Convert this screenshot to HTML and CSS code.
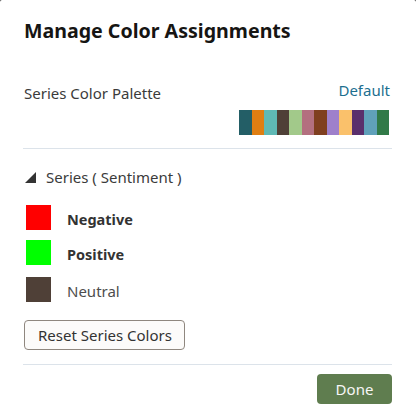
FILE: index.html
```html
<!DOCTYPE html>
<html>
<head>
<meta charset="utf-8">
<link rel="stylesheet" href="styles.css">
</head>
<body>
<div class="dialog">
  <h1 class="title">Manage Color Assignments</h1>
  <div class="palette-row">
    <span class="label">Series Color Palette</span>
    <div class="palette-right">
      <a class="link">Default</a>
      <div class="swatches">
        <span style="background:#235e66"></span>
        <span style="background:#df7e12"></span>
        <span style="background:#5fb9b5"></span>
        <span style="background:#4f4037"></span>
        <span style="background:#a2c98a"></span>
        <span style="background:#b3707f"></span>
        <span style="background:#7f3f1f"></span>
        <span style="background:#9e80cb"></span>
        <span style="background:#fac16b"></span>
        <span style="background:#5a2f6c"></span>
        <span style="background:#60a1ba"></span>
        <span style="background:#317a48"></span>
      </div>
    </div>
  </div>
  <div class="divider"></div>
  <div class="series-head">
    <svg class="tri" width="11" height="11" viewBox="0 0 11 11"><polygon points="11,0 11,11 0,11" fill="#333"/></svg>
    <span class="head-label">Series ( Sentiment )</span>
  </div>
  <ul class="series">
    <li><span class="sw" style="background:#ff0000"></span><span class="name bold">Negative</span></li>
    <li><span class="sw" style="background:#00ff00"></span><span class="name bold">Positive</span></li>
    <li><span class="sw" style="background:#4f4037"></span><span class="name">Neutral</span></li>
  </ul>
  <button class="btn-reset">Reset Series Colors</button>
  <div class="divider bottom"></div>
  <div class="footer">
    <button class="btn-done">Done</button>
  </div>
</div>
</body>
</html>
```

FILE: styles.css
```css
html, body {
  margin: 0;
  padding: 0;
  background: #3a3a3a;
}
body {
  font-family: "Noto Sans", "Open Sans", sans-serif;
  color: #333;
}
.dialog {
  width: 416px;
  height: 413px;
  box-sizing: border-box;
  padding: 0 24px;
  background: #fff;
  border-radius: 2px 2px 0 0;
}
.title {
  margin: 0;
  padding-top: 17px;
  font-size: 19.6px;
  line-height: 28px;
  font-weight: 700;
  color: #161513;
}
.palette-row {
  display: flex;
  justify-content: space-between;
  align-items: flex-start;
  margin-top: 35px;
}
.label {
  font-size: 15px;
  color: #3b3b3b;
  line-height: 20px;
  margin-top: 3px;
}
.palette-right {
  display: flex;
  flex-direction: column;
  align-items: flex-end;
}
.link {
  font-size: 15px;
  line-height: 20px;
  color: #1d6f8f;
  margin-right: 2px;
}
.swatches {
  display: flex;
  margin-top: 10px;
  margin-right: 3px;
}
.swatches span {
  width: 12.5px;
  height: 25px;
}
.divider {
  height: 1px;
  background: #dce3ea;
  margin: 13px 0 0 -1px;
}
.series-head {
  display: flex;
  align-items: center;
  height: 20px;
  margin-top: 18px;
}
.tri {
  margin-left: 1px;
  margin-right: 10px;
}
.head-label {
  font-size: 15px;
  line-height: 20px;
  color: #3b3b3b;
}
.series {
  list-style: none;
  margin: 18px 0 0 0;
  padding: 0;
}
.series li {
  display: flex;
  align-items: center;
  height: 25px;
  margin-bottom: 10px;
}
.series li:nth-child(2) { margin-bottom: 12px; }
.series li:last-child { margin-bottom: 0; }
.sw {
  width: 25px;
  height: 25px;
  margin-left: 2px;
  margin-right: 16px;
}
.name {
  font-size: 15px;
  line-height: 20px;
  color: #4d4d4d;
  margin-top: 3px;
}
.name.bold {
  font-size: 14.5px;
  font-weight: 700;
  color: #333;
}
.btn-reset {
  display: block;
  margin-top: 18px;
  height: 30px;
  padding: 0 12px 0 13px;
  border: 1px solid #8f877f;
  border-radius: 4px;
  background: #fcfbfa;
  font-family: inherit;
  font-size: 15px;
  color: #333;
}
.divider.bottom {
  margin-top: 14px;
}
.footer {
  display: flex;
  justify-content: flex-end;
  margin-top: 9px;
}
.btn-done {
  width: 75px;
  height: 30px;
  border: none;
  border-radius: 4px;
  background: #5f7d4f;
  color: #f7f7f7;
  font-family: inherit;
  font-size: 15px;
}
```
